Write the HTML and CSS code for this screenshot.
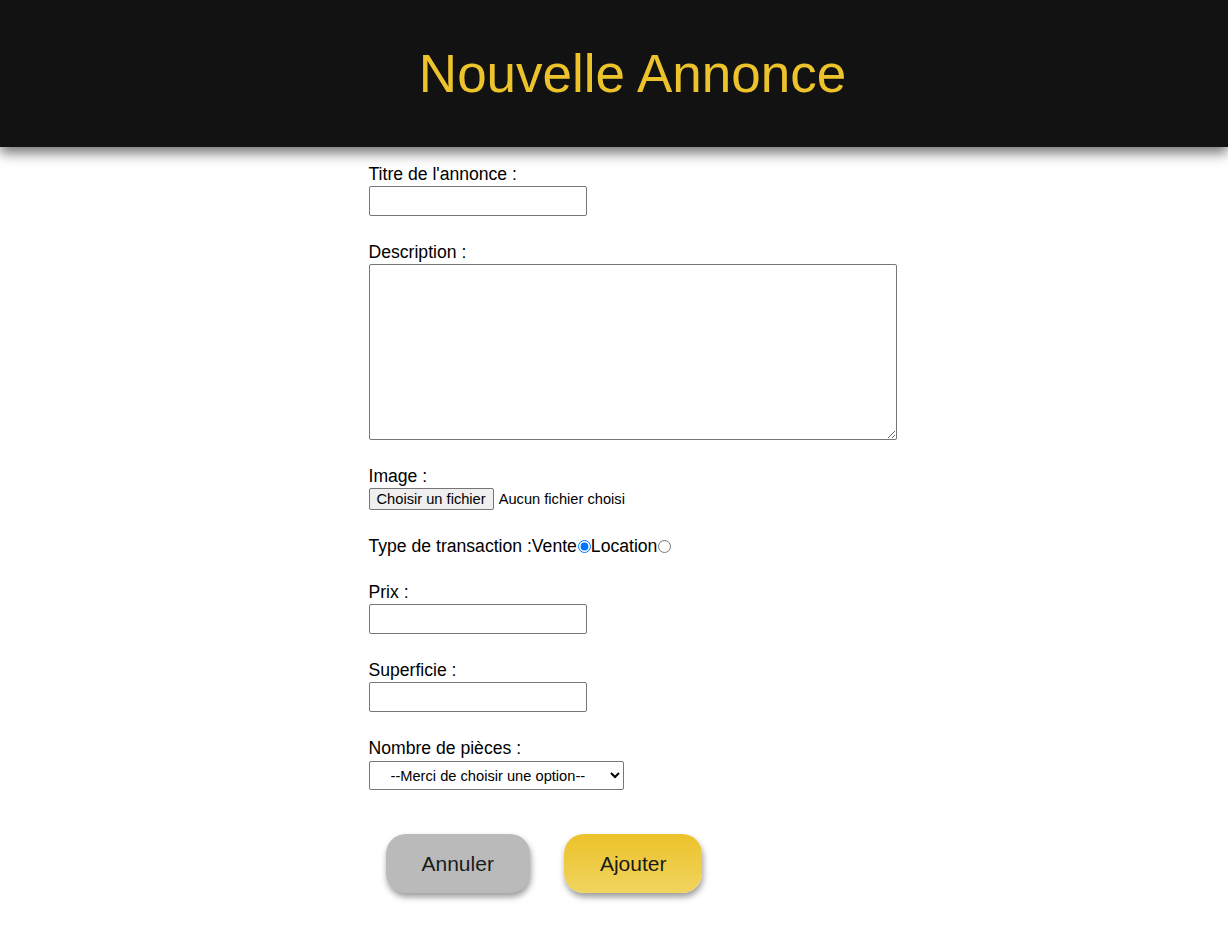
FILE: index.html
```html
<!DOCTYPE html>
<html lang="fr">
<head>
<meta charset="utf-8">
<title>Nouvelle Annonce</title>
<link rel="stylesheet" href="styles.css">
</head>
<body>
<header class="top">
  <h1 class="top-title">Nouvelle Annonce</h1>
</header>
<main class="page">
  <form class="form">
    <div class="field">
      <label class="label" for="titre">Titre de l'annonce :</label>
      <input class="text-input" type="text" id="titre">
    </div>
    <div class="field">
      <label class="label" for="desc">Description :</label>
      <textarea class="area" id="desc"></textarea>
    </div>
    <div class="field">
      <span class="label">Image :</span>
      <div class="file-row">
        <label class="file-btn" for="img">Choisir un fichier</label>
        <span class="file-name">Aucun fichier choisi</span>
        <input class="file-hidden" type="file" id="img">
      </div>
    </div>
    <div class="field field-inline">
      <span class="label">Type de transaction :</span><label class="radio-label" for="vente">Vente</label><input class="radio" type="radio" name="type" id="vente" checked><label class="radio-label" for="location">Location</label><input class="radio" type="radio" name="type" id="location">
    </div>
    <div class="field">
      <label class="label" for="prix">Prix :</label>
      <input class="text-input" type="text" id="prix">
    </div>
    <div class="field">
      <label class="label" for="sup">Superficie :</label>
      <input class="text-input" type="text" id="sup">
    </div>
    <div class="field">
      <label class="label label-select" for="pieces">Nombre de pièces :</label>
      <select class="select" id="pieces">
        <option>--Merci de choisir une option--</option>
        <option>1</option>
        <option>2</option>
        <option>3</option>
      </select>
    </div>
    <div class="actions">
      <button class="btn btn-cancel" type="button">Annuler</button>
      <button class="btn btn-add" type="submit">Ajouter</button>
    </div>
  </form>
</main>
</body>
</html>
```

FILE: styles.css
```css
html, body {
  margin: 0;
  padding: 0;
  background: #ffffff;
  font-family: "Liberation Sans", Arial, sans-serif;
  color: #000;
}

.top {
  background: #121212;
  height: 147px;
  display: flex;
  align-items: center;
  justify-content: center;
  padding-left: 37px;
  box-shadow: 0 6px 12px rgba(0, 0, 0, 0.55);
  position: relative;
  z-index: 1;
}

.top-title {
  margin: 0;
  color: #ecc32b;
  font-weight: normal;
  font-size: 53px;
  line-height: 1;
}

.page {
  display: flex;
  justify-content: center;
  padding-left: 37px;
  padding-bottom: 60px;
}

.form {
  width: 528px;
  display: flex;
  flex-direction: column;
  padding-top: 17px;
}

.field {
  display: flex;
  flex-direction: column;
  align-items: flex-start;
  margin-bottom: 26px;
}

.field-inline {
  flex-direction: row;
  align-items: center;
  height: 20px;
}

.label {
  font-size: 17.6px;
  line-height: 20px;
  margin-bottom: 2px;
}

.label-select {
  margin-bottom: 3px;
}

.field-inline .label {
  margin-bottom: 0;
}

.radio-label {
  font-size: 17.6px;
  line-height: 20px;
}

.radio {
  margin: 0 0 0 1px;
  width: 13px;
  height: 13px;
}

.text-input {
  box-sizing: border-box;
  width: 218px;
  height: 30px;
  margin: 0;
  border: 1px solid #767676;
  border-radius: 2px;
  font-family: inherit;
  font-size: 14.67px;
}

.area {
  box-sizing: border-box;
  width: 528px;
  height: 176px;
  margin: 0;
  border: 1px solid #767676;
  border-radius: 2px;
  font-family: inherit;
  font-size: 14.67px;
}

.file-row {
  display: flex;
  align-items: center;
  height: 22px;
}

.file-btn {
  box-sizing: border-box;
  height: 22px;
  display: flex;
  align-items: center;
  padding: 0 7px;
  background: #efefef;
  border: 1px solid #767676;
  border-radius: 2px;
  font-size: 14.67px;
  color: #000;
}

.file-name {
  margin-left: 5px;
  font-size: 14.67px;
}

.file-hidden {
  display: none;
}

.select {
  box-sizing: border-box;
  width: 255px;
  height: 29px;
  margin: 0;
  font-family: inherit;
  font-size: 14.67px;
  border: 1px solid #767676;
  border-radius: 2px;
  background: #fff;
  color: #000;
  padding: 0 4px 0 17px;
}

.actions {
  display: flex;
  gap: 34px;
  padding-left: 17px;
  margin-top: 18px;
}

.btn {
  height: 59px;
  padding: 0 36px;
  border: none;
  border-radius: 20px;
  font-family: inherit;
  font-size: 21px;
  color: #1a1a1a;
  box-shadow: 1px 4px 6px rgba(0, 0, 0, 0.4);
  cursor: pointer;
}

.btn-cancel {
  background: #bbbabb;
}

.btn-add {
  background: linear-gradient(#ecc22a, #f1d45f);
}
```
